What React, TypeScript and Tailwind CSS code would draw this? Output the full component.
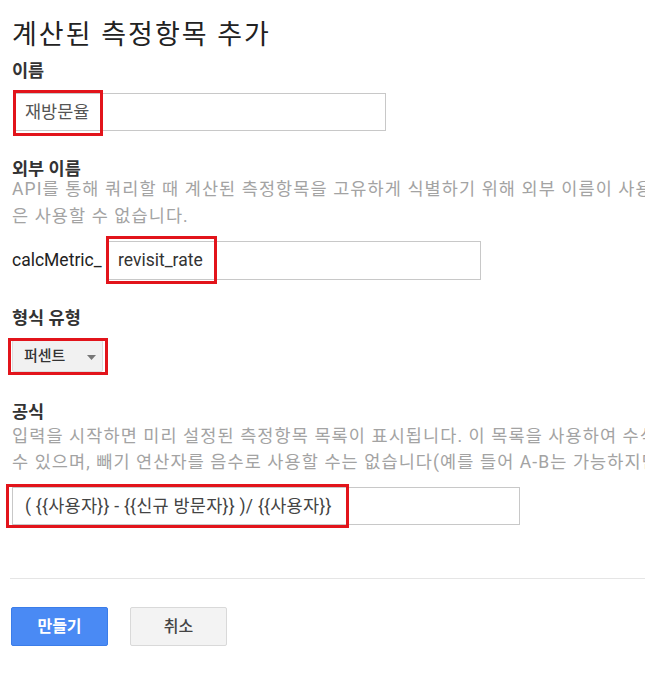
import React from 'react';

const font = "font-['Roboto','Noto_Sans_CJK_KR',sans-serif]";

const RedBox: React.FC<{ className: string }> = ({ className }) => (
  <span className={`pointer-events-none absolute border-[3px] border-[#e2141b] ${className}`} />
);

const Label: React.FC<{ children: React.ReactNode; className?: string }> = ({ children, className = '' }) => (
  <div className={`text-[17.5px] leading-[18px] font-bold text-[#333] ${className}`}>{children}</div>
);

const Help: React.FC<{ lines: string[]; className?: string }> = ({ lines, className = '' }) => (
  <div className={`text-[17.5px] tracking-[1.1px] text-[#a3a3a3] whitespace-nowrap ${className}`}>
    {lines.map((l) => (
      <div key={l}>{l}</div>
    ))}
  </div>
);

export default function App() {
  return (
    <div className={`w-[645px] h-[681px] overflow-hidden bg-white ${font}`}>
      <div className="pl-[12px] pt-[17px]">
        <h1 className="text-[27px] leading-[36px] tracking-[2px] font-normal text-[#222]">계산된 측정항목 추가</h1>

        {/* 이름 */}
        <Label className="mt-[9px]">이름</Label>
        <div className="relative ml-[2px] mt-[13px] w-[372px] h-[38px] border border-[#c8c8c8] flex items-center pl-[10px] text-[17.5px] text-[#555]">
          재방문율
          <RedBox className="-left-[2px] -top-[4px] w-[90px] h-[46px]" />
        </div>

        {/* 외부 이름 */}
        <Label className="mt-[29px]">외부 이름</Label>
        <Help
          className="mt-[-2px] leading-[27px]"
          lines={[
            'API를 통해 쿼리할 때 계산된 측정항목을 고유하게 식별하기 위해 외부 이름이 사용됩니다. 영숫자와 밑줄만 사용할 수 있으며 공백이나 특수문자',
            '은 사용할 수 없습니다.',
          ]}
        />
        <div className="mt-[11px] flex items-center h-[39px]">
          <span className="w-[94px] text-[17.5px] text-[#222]">calcMetric_</span>
          <div className="relative w-[375px] h-[39px] border border-[#c8c8c8] flex items-center pl-[11px] text-[17.5px] text-[#333]">
            revisit_rate
            <RedBox className="-left-[1px] -top-[6px] w-[111px] h-[48px]" />
          </div>
        </div>

        {/* 형식 유형 */}
        <Label className="mt-[29px]">형식 유형</Label>
        <div className="mt-[13px] relative w-[91px] h-[32px] bg-[#f1f1f1] border border-[#dcdcdc] rounded-[2px] flex items-center pl-[11px] text-[15px] font-medium text-[#333]">
          퍼센트
          <svg className="absolute left-[74px] top-[14px] w-[9px] h-[5px]" viewBox="0 0 9 5">
            <path d="M0 0h9L4.5 5z" fill="#777" />
          </svg>
          <RedBox className="-left-[5px] -top-[3px] w-[100px] h-[37px]" />
        </div>

        {/* 공식 */}
        <Label className="mt-[31px]">공식</Label>
        <Help
          className="mt-[2px] leading-[26px]"
          lines={[
            '입력을 시작하면 미리 설정된 측정항목 목록이 표시됩니다. 이 목록을 사용하여 수식을 작성할 수 있습니다. 더하기, 빼기, 곱하기, 나누기 연산자를 사용할',
            '수 있으며, 빼기 연산자를 음수로 사용할 수는 없습니다(예를 들어 A-B는 가능하지만 A+-B는 불가능합니다).',
          ]}
        />
        <div className="relative mt-[12px] w-[508px] h-[38px] border border-[#c8c8c8] flex items-center pl-[12px] text-[17.5px] text-[#444] tracking-[0.25px]">
          ( {'{{'}사용자{'}}'} - {'{{'}신규 방문자{'}}'} )/ {'{{'}사용자{'}}'}
          <RedBox className="-left-[7px] -top-[4px] w-[343px] h-[44px]" />
        </div>
      </div>

      <div className="ml-[10px] mt-[53px] border-t border-[#e5e5e5]" />

      <div className="ml-[11px] mt-[28px] flex gap-[22px]">
        <button className="w-[97px] h-[39px] rounded-[2px] bg-[#4a8af4] border border-[#3b7de9] text-white text-[16px] font-bold">
          만들기
        </button>
        <button className="w-[97px] h-[39px] rounded-[2px] bg-[#f3f3f3] border border-[#d9d9d9] text-[#444] text-[16px] font-medium">
          취소
        </button>
      </div>
    </div>
  );
}
